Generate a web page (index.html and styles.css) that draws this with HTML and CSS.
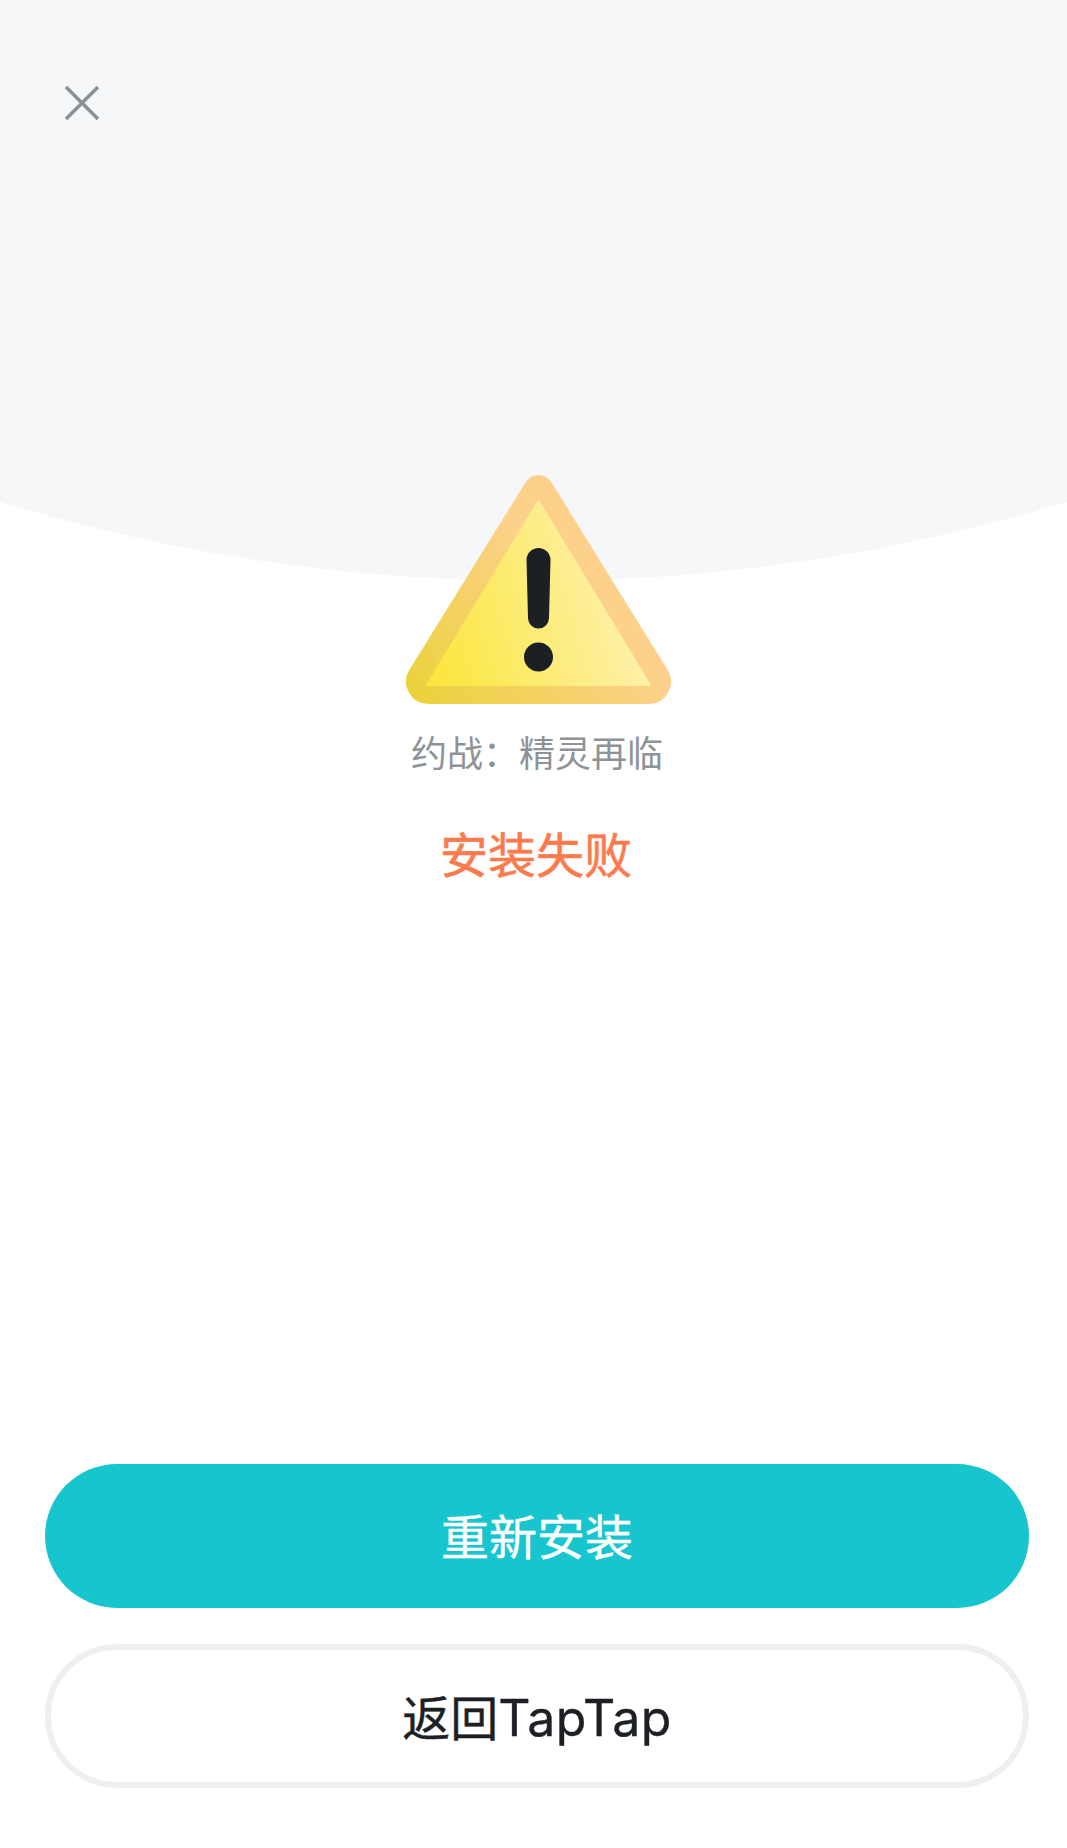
FILE: index.html
```html
<!DOCTYPE html>
<html lang="zh-CN">
<head>
<meta charset="utf-8">
<title>安装失败</title>
<link rel="stylesheet" href="styles.css">
</head>
<body>
<main class="page">
  <div class="arc"></div>
  <header class="topbar">
    <button class="close" aria-label="关闭">
      <svg class="close-icon" viewBox="0 0 36 36"><path d="M2 2L34 34M34 2L2 34"/></svg>
    </button>
  </header>
  <section class="status">
    <svg class="warning" viewBox="0 0 265 229">
      <defs>
        <linearGradient id="outer" gradientUnits="userSpaceOnUse" x1="10" y1="220" x2="150" y2="90">
          <stop offset="0" stop-color="#ebd23c"/>
          <stop offset="1" stop-color="#fdd18c"/>
        </linearGradient>
        <linearGradient id="inner" gradientUnits="userSpaceOnUse" x1="35" y1="205" x2="220" y2="150">
          <stop offset="0" stop-color="#fbe73f"/>
          <stop offset="1" stop-color="#fef0a6"/>
        </linearGradient>
      </defs>
      <path class="tri-outer" d="M119.75 7.1A15 15 0 0 1 145.25 7.1L261.6 194.8A22.4 22.4 0 0 1 242.6 229H22.4A22.4 22.4 0 0 1 3.4 194.8Z"/>
      <polygon class="tri-inner" points="132.5,27 22,209.5 243,209.5"/>
      <path class="mark" d="M120.5 85a12 12 0 0 1 24 0l-1.5 58a10.5 10.5 0 0 1-21 0z"/>
      <circle class="mark" cx="132.5" cy="182" r="14.5"/>
    </svg>
    <p class="game-name">约战：精灵再临</p>
    <h1 class="result">安装失败</h1>
  </section>
  <footer class="actions">
    <button class="btn btn-primary">重新安装</button>
    <button class="btn btn-secondary">返回<span class="latin">TapTap</span></button>
  </footer>
</main>
</body>
</html>
```
FILE: styles.css
```css
* { box-sizing: border-box; }
html, body { margin: 0; padding: 0; background: #fff; }
body { font-family: Inter, "Noto Sans CJK SC", sans-serif; }
.page {
  position: relative;
  display: flex;
  flex-direction: column;
  min-height: 100vh;
  overflow: hidden;
}
.arc {
  position: absolute;
  top: 0;
  left: 0;
  right: 0;
  height: 581px;
  background: #f6f7f9;
  clip-path: ellipse(1841px 1841px at 50% -1260px);
}
.topbar {
  position: relative;
  padding: 85px 0 0 64px;
  height: 475px;
}
.close {
  display: block;
  width: 36px;
  height: 36px;
  padding: 0;
  border: 0;
  background: none;
}
.close-icon { display: block; width: 36px; height: 36px; }
.close-icon path { fill: none; stroke: #8a9094; stroke-width: 3.5; }
.status {
  position: relative;
  display: flex;
  flex-direction: column;
  align-items: center;
}
.warning { display: block; width: 265px; height: 229px; margin-left: 10px; }
.tri-outer { fill: url(#outer); }
.tri-inner { fill: url(#inner); stroke: url(#inner); stroke-width: 3; stroke-linejoin: round; }
.mark { fill: #1c1f24; }
.game-name {
  margin: 24px 0 0 7px;
  font-size: 36px;
  line-height: 52px;
  color: #8e9397;
}
.result {
  margin: 42px 0 0 5px;
  font-size: 48px;
  line-height: 68px;
  font-weight: 400;
  -webkit-text-stroke: 0.6px #fb7b4d;
  color: #fb7b4d;
}
.actions {
  margin-top: auto;
  display: flex;
  flex-direction: column;
  gap: 36px;
  padding: 0 38px 60px 45px;
}
.btn {
  display: block;
  width: 100%;
  height: 144px;
  border-radius: 72px;
  font-family: inherit;
  font-size: 48px;
  line-height: 1;
  padding: 4px 0 0;
}
.btn-primary { border: 0; background: #16c5ce; color: #fff; -webkit-text-stroke: 0.4px #fff; }
.btn-secondary { border: 6px solid #eef0f0; background: #fff; color: #1c1f24; -webkit-text-stroke: 0.4px #1c1f24; }
.latin { font-size: 50px; letter-spacing: 0.5px; }
```
